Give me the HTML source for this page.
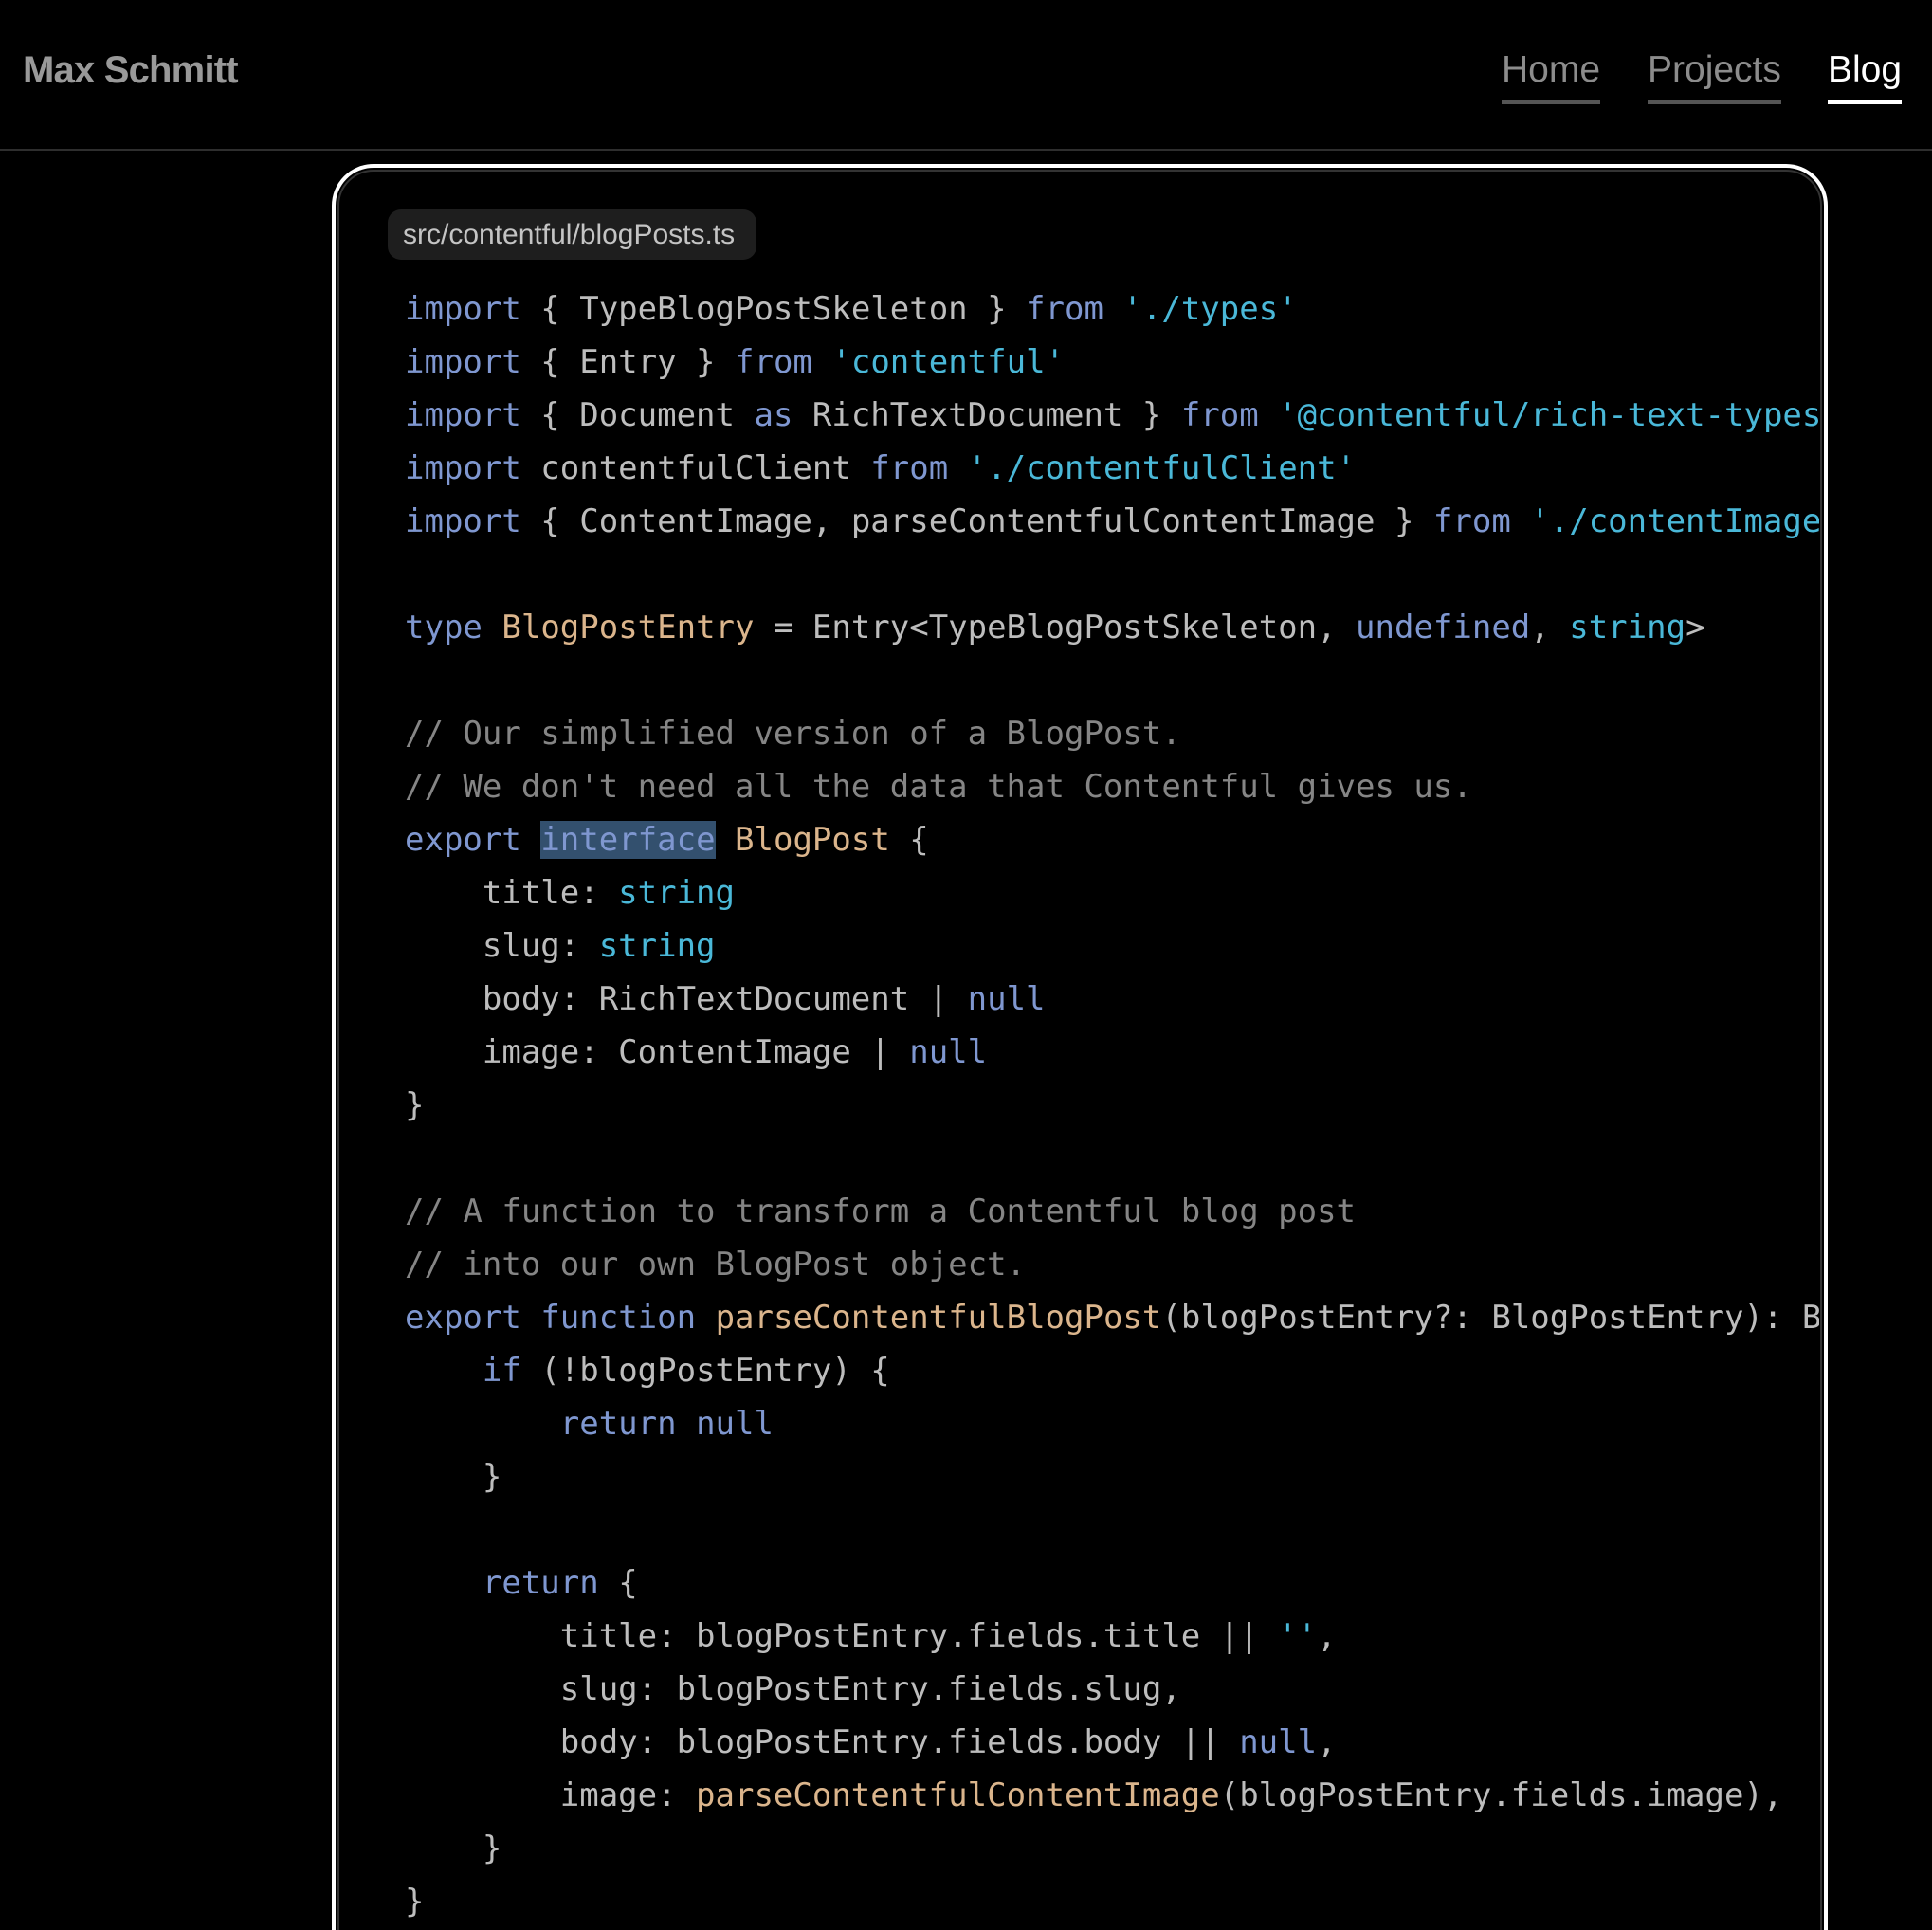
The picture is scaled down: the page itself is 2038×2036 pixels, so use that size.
<!DOCTYPE html>
<html><head><meta charset="utf-8"><style>
html,body{margin:0;padding:0;background:#000;width:2038px;height:2036px;overflow:hidden}
.wrap{position:relative;width:2038px;height:2036px;overflow:hidden;background:#000}
.hdr{position:absolute;left:0;top:0;width:2038px;height:157px;border-bottom:2px solid #2e2e2e;font-family:"Liberation Sans",sans-serif}
.logo{position:absolute;left:24px;top:52px;font-size:40px;font-weight:bold;color:#999;letter-spacing:-0.8px}
.nav{position:absolute;top:52px;font-size:39px;color:#8c8c8c}
.nav span{display:block;height:4px;background:#555;margin-top:10px}
.box{position:absolute;left:350px;top:173px;width:1578px;height:1950px;border:4px solid #fff;border-radius:44px;box-sizing:border-box}
.inner{position:absolute;left:2px;top:2px;right:2px;bottom:2px;border:2px solid #333;border-radius:38px}
.pill{position:absolute;left:409px;top:221px;width:389px;height:53px;background:#1e1e1e;border-radius:14px;color:#c4c4c4;font-family:"Liberation Sans",sans-serif;font-size:30px;line-height:53px;text-indent:16px;box-sizing:border-box;white-space:nowrap}
pre{position:absolute;left:427px;top:298px;width:1492px;overflow:hidden;margin:0;font-family:"DejaVu Sans Mono","Liberation Mono",monospace;font-size:34px;line-height:56px;color:#bdbdbd}
.k{color:#7f97d0}.s{color:#4ab8d8}.c{color:#858585}.t{color:#dbb58c}.h{background:#33506e}
</style></head><body>
<div class="wrap">
<div class="hdr">
<div class="logo">Max Schmitt</div>
<div class="nav" style="left:1584px">Home<span></span></div>
<div class="nav" style="left:1738px">Projects<span></span></div>
<div class="nav" style="left:1928px;color:#fff">Blog<span style="background:#fff"></span></div>
</div>
<div class="box"><div class="inner"></div></div>
<div class="pill">src/contentful/blogPosts.ts</div>
<pre><span class="k">import</span> { TypeBlogPostSkeleton } <span class="k">from</span> <span class="s">'./types'</span>
<span class="k">import</span> { Entry } <span class="k">from</span> <span class="s">'contentful'</span>
<span class="k">import</span> { Document <span class="k">as</span> RichTextDocument } <span class="k">from</span> <span class="s">'@contentful/rich-text-types'</span>
<span class="k">import</span> contentfulClient <span class="k">from</span> <span class="s">'./contentfulClient'</span>
<span class="k">import</span> { ContentImage, parseContentfulContentImage } <span class="k">from</span> <span class="s">'./contentImage'</span>

<span class="k">type</span> <span class="t">BlogPostEntry</span> = Entry&lt;TypeBlogPostSkeleton, <span class="k">undefined</span>, <span class="s">string</span>&gt;

<span class="c">// Our simplified version of a BlogPost.</span>
<span class="c">// We don't need all the data that Contentful gives us.</span>
<span class="k">export</span> <span class="k h">interface</span> <span class="t">BlogPost</span> {
    title: <span class="s">string</span>
    slug: <span class="s">string</span>
    body: RichTextDocument | <span class="k">null</span>
    image: ContentImage | <span class="k">null</span>
}

<span class="c">// A function to transform a Contentful blog post</span>
<span class="c">// into our own BlogPost object.</span>
<span class="k">export</span> <span class="k">function</span> <span class="t">parseContentfulBlogPost</span>(blogPostEntry?: BlogPostEntry): BlogPost | <span class="k">null</span> {
    <span class="k">if</span> (!blogPostEntry) {
        <span class="k">return</span> <span class="k">null</span>
    }

    <span class="k">return</span> {
        title: blogPostEntry.fields.title || <span class="s">''</span>,
        slug: blogPostEntry.fields.slug,
        body: blogPostEntry.fields.body || <span class="k">null</span>,
        image: <span class="t">parseContentfulContentImage</span>(blogPostEntry.fields.image),
    }
}
</pre>
</div>
</body></html>
